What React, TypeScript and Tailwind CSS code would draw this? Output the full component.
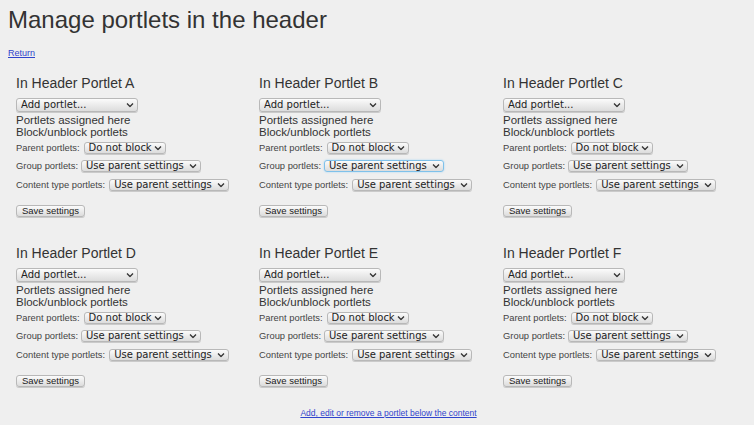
import React from "react";

const portlets = ["A", "B", "C", "D", "E", "F"];

function Chevron() {
  return (
    <svg
      width="8"
      height="5"
      viewBox="0 0 8 5"
      className="pointer-events-none absolute right-[4px] top-1/2 -translate-y-1/2"
    >
      <polyline points="1,1 4,4 7,1" fill="none" stroke="#333" strokeWidth="1.3" />
    </svg>
  );
}

function Select({
  options,
  width,
  tall,
  focused,
  className = "",
}: {
  options: string[];
  width: string;
  tall?: boolean;
  focused?: boolean;
  className?: string;
}) {
  return (
    <span className={`relative flex shrink-0 ${width} ${className}`}>
      <select
        className={`block w-full min-h-0 appearance-none rounded-[3px] border bg-gradient-to-b from-[#fbfbfb] to-[#dcdcdc] pl-[4px] pr-[12px] py-0 font-['DejaVu_Sans',sans-serif] text-[10px] leading-none text-[#222] outline-none ${
          tall ? "h-[14px]" : "h-[12px]"
        } ${
          focused
            ? "border-[#7fc1ea] shadow-[0_0_2px_#9fd3f5]"
            : "border-[#b8b8b8] shadow-[0_1px_0_#cacaca]"
        }`}
        defaultValue={options[0]}
      >
        {options.map((o) => (
          <option key={o}>{o}</option>
        ))}
      </select>
      <Chevron />
    </span>
  );
}

function PortletBox({ name }: { name: string }) {
  return (
    <div className="flex flex-col items-start">
      <h3 className="text-[14px] leading-[16px] text-[#333] font-normal">
        In Header Portlet {name}
      </h3>
      <Select
        options={["Add portlet..."]}
        width="w-[122px]"
        tall
        className="mt-[7px]"
      />
      <div className="text-[11.5px] leading-[11.5px] text-[#333] mt-[3px]">
        <div>Portlets assigned here</div>
        <div>Block/unblock portlets</div>
      </div>
      <div className="mt-[1px] flex flex-col text-[9.4px] leading-[12px] text-[#444]">
        <div className="flex h-[18px] items-center gap-[4px]">
          <span>Parent portlets:</span>
          <Select options={["Do not block"]} width="w-[82px]" />
        </div>
        <div className="flex h-[18px] items-center gap-[3px]">
          <span>Group portlets:</span>
          <Select
            options={["Use parent settings"]}
            width="w-[120px]"
            focused={name === "B"}
          />
        </div>
        <div className="flex h-[19px] items-center gap-[4px]">
          <span>Content type portlets:</span>
          <Select options={["Use parent settings"]} width="w-[120px]" />
        </div>
      </div>
      <button className="mt-[11px] h-[12px] w-[69px] rounded-[3px] border border-[#b8b8b8] bg-gradient-to-b from-[#fbfbfb] to-[#dcdcdc] text-[9.5px] leading-none text-[#222] shadow-[0_1px_0_#cacaca]">
        Save settings
      </button>
    </div>
  );
}

export default function App() {
  return (
    <div className="min-h-[425px] w-[754px] bg-[#efefef] px-2 pt-2 font-['Liberation_Sans',Arial,sans-serif]">
      <h1 className="text-[24px] leading-[24px] text-[#333] font-normal">
        Manage portlets in the header
      </h1>
      <div className="mt-[15px] text-[9px] leading-[12px]">
        <a href="#" className="text-[#2f44cc] underline">
          Return
        </a>
      </div>
      <div className="mt-[16px] grid grid-cols-[243px_244px_243px] grid-rows-[170px_163px] pl-2">
        {portlets.map((p) => (
          <PortletBox key={p} name={p} />
        ))}
      </div>
      <div className="flex justify-center pl-[23px] text-[8.5px] leading-[10px]">
        <a href="#" className="text-[#2f44cc] underline">
          Add, edit or remove a portlet below the content
        </a>
      </div>
    </div>
  );
}
